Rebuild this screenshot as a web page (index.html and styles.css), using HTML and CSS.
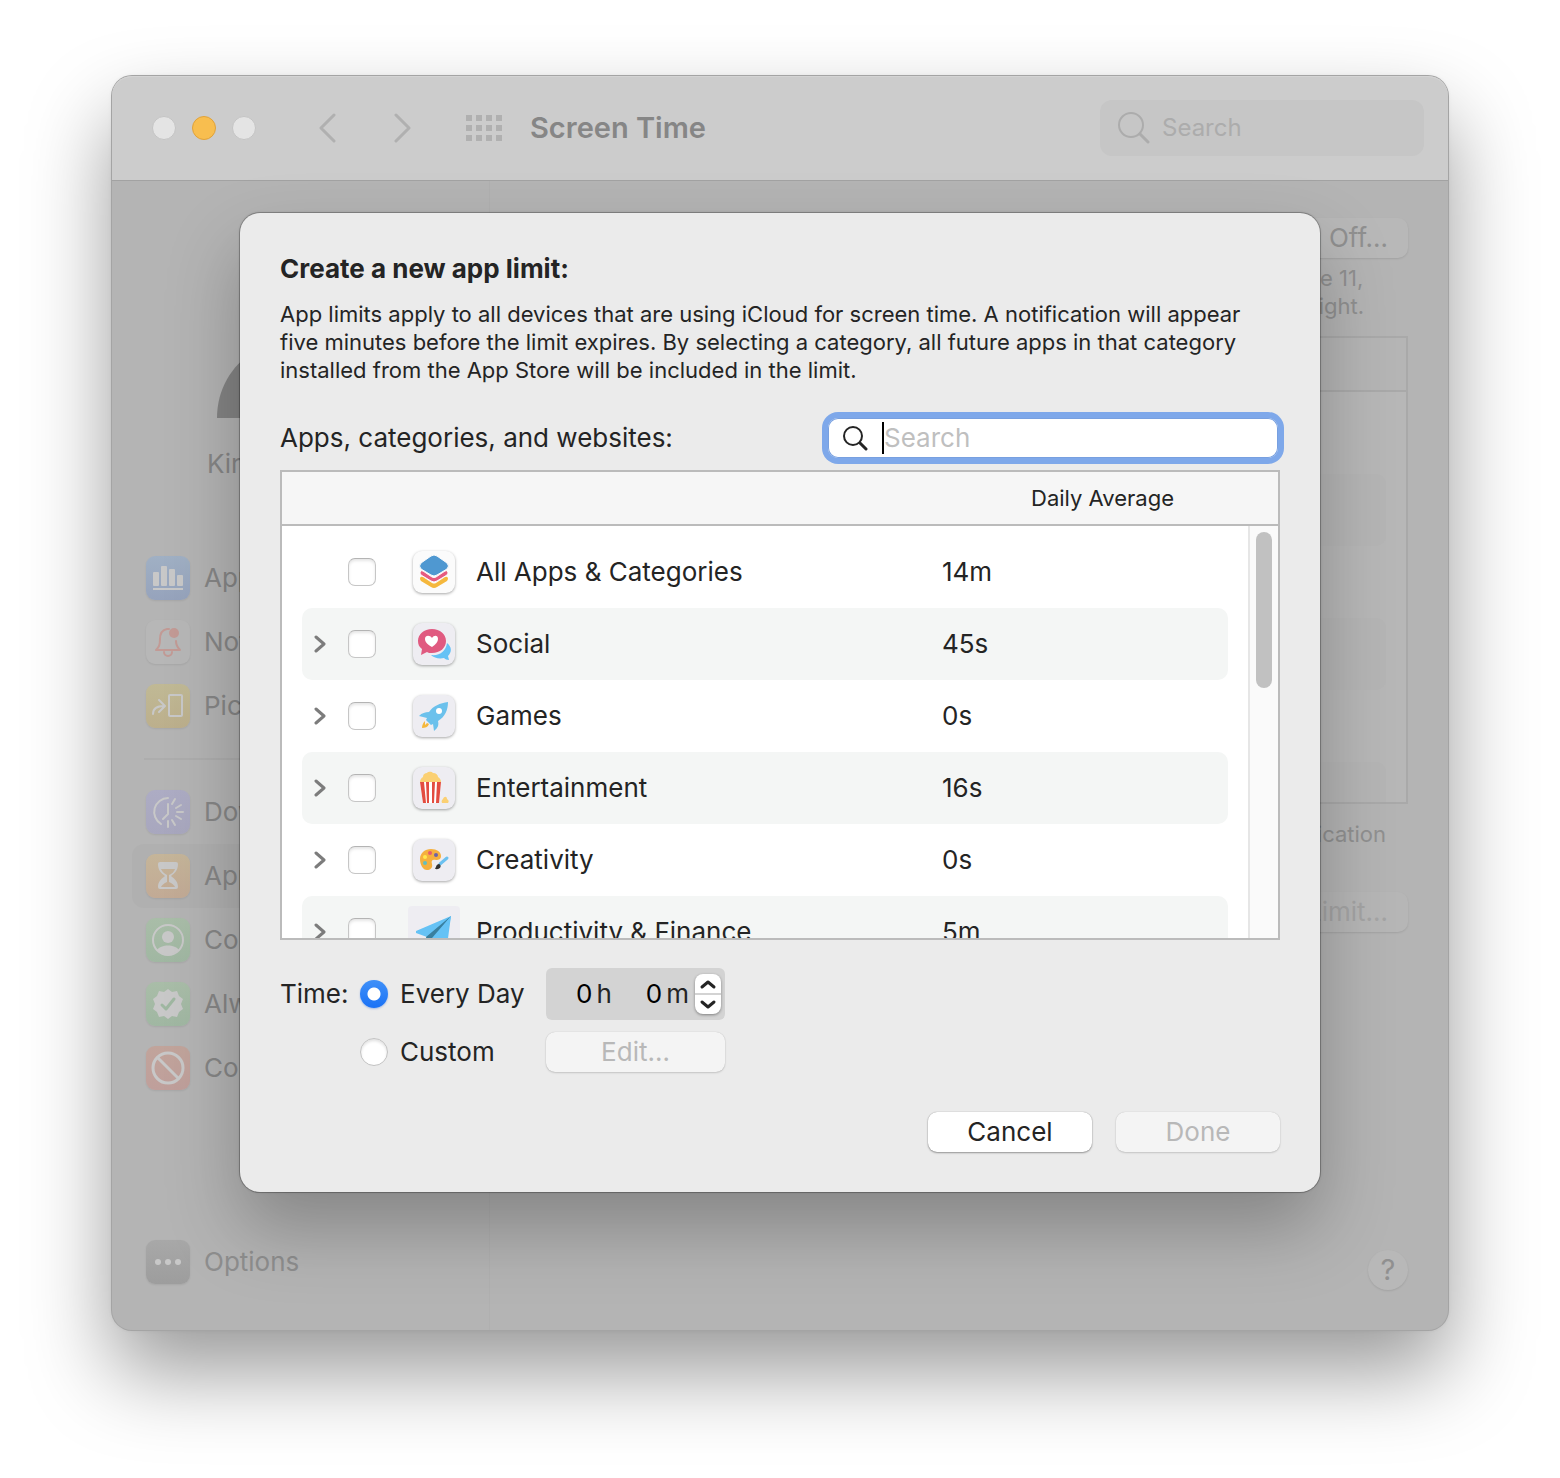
FILE: index.html
```html
<!DOCTYPE html>
<html lang="en">
<head>
  <meta charset="UTF-8" />
  <meta name="viewport" content="width=device-width, initial-scale=1.0"/>
  <title>Screen Time</title>
  <link rel="stylesheet" href="styles.css">
</head>
<body>
  <div class="window">
    <header class="titlebar">
      <div class="lights">
        <button class="light" aria-label="Close"></button>
        <button class="light light-yellow" aria-label="Minimize"></button>
        <button class="light" aria-label="Zoom"></button>
      </div>
      <div class="history">
        <button class="icon-btn" aria-label="Back">
          <svg width="18" height="30" viewBox="0 0 18 30"><path d="M16 2 3 15l13 13"/></svg>
        </button>
        <button class="icon-btn" aria-label="Forward">
          <svg width="18" height="30" viewBox="0 0 18 30"><path d="m2 2 13 13L2 28"/></svg>
        </button>
      </div>
      <button class="icon-btn all-btn" aria-label="Show all">
        <svg width="36" height="26" viewBox="0 0 36 26">
          <path d="M3 0v26M13 0v26M23 0v26M33 0v26" stroke-width="6" stroke-dasharray="6 4"/>
        </svg>
      </button>
      <h1>Screen Time</h1>
      <label class="title-search">
        <svg width="32" height="32" viewBox="0 0 32 32"><circle cx="13" cy="13" r="12"/><path d="m22 22 8 8" stroke-width="3"/></svg>
        <input type="search" placeholder="Search" aria-label="Search preferences">
      </label>
    </header>

    <div class="panes">
      <nav class="sidebar">
        <svg class="avatar" width="168" height="180" viewBox="0 0 168 180">
          <circle cx="84" cy="52" r="42"/>
          <path d="M0 180C0 152 14 128 36 114c28-14 68-14 96 0 22 14 36 38 36 66z"/>
        </svg>
        <p class="user">Kirk McElhearn</p>

        <a href="#" class="nav-item">
          <span class="nav-icon blue"><svg viewBox="0 0 44 44"><g class="fill">
            <rect x="7" y="16" width="6" height="14" rx="1"/><rect x="15" y="10" width="6" height="20" rx="1"/>
            <rect x="23" y="13" width="6" height="17" rx="1"/><rect x="31" y="19" width="6" height="11" rx="1"/>
            <rect x="7" y="32" width="30" height="2"/></g></svg></span>
          App Usage
        </a>
        <a href="#" class="nav-item">
          <span class="nav-icon plain"><svg viewBox="0 0 44 44">
            <path d="M23 9h-2c-5 1-7 5-7 10 0 6-1 8-4 11h24c-2-2-4-4-4-9M18 32a4 4 0 0 0 8 0"/>
            <circle class="dot" cx="28" cy="13" r="5"/></svg></span>
          Notifications
        </a>
        <a href="#" class="nav-item">
          <span class="nav-icon yellow"><svg viewBox="0 0 44 44">
            <path d="M7 30c0-6 4-8 11-8M13 16l6 6-6 6"/><rect x="23" y="11" width="13" height="21" rx="1"/></svg></span>
          Pickups
        </a>
        <hr>
        <a href="#" class="nav-item">
          <span class="nav-icon purple"><svg viewBox="0 0 44 44">
            <path d="M22 8A14 14 0 0 0 15 34M22 14v10l-5 5M26 14l3-5M30 18l5-3M31 22h6M30 26l5 3M26 30l3 5M22 31v6"/></svg></span>
          Downtime
        </a>
        <a href="#" class="nav-item selected">
          <span class="nav-icon orange"><svg viewBox="0 0 44 44">
            <path class="fill" fill-rule="evenodd" d="M14 8h16q2 0 2 2c0 6-3 9-7 12 4 3 7 6 7 11q0 2-2 2H14q-2 0-2-2c0-5 3-8 7-11-4-3-7-6-7-12q0-2 2-2zm1 7c1 3 4 5 6 6v7c-3 1-5 3-6 5h14c-1-2-3-4-6-5v-7c3-1 5-3 6-6z"/></svg></span>
          App Limits
        </a>
        <a href="#" class="nav-item">
          <span class="nav-icon green"><svg viewBox="0 0 44 44">
            <circle cx="22" cy="22" r="15"/><circle class="fill" cx="22" cy="19" r="6"/>
            <path class="fill" d="M11 32c4-6 18-6 22 0-6 6-16 6-22 0z"/></svg></span>
          Communication
        </a>
        <a href="#" class="nav-item">
          <span class="nav-icon green"><svg viewBox="0 0 44 44">
            <path class="fill" d="m22 7 4 3 5-1 2 5 4 3-2 5 2 5-4 3-2 5-5-1-4 3-4-3-5 1-2-5-4-3 2-5-2-5 4-3 2-5 5 1z"/>
            <path class="tick" d="m16 23 4 4 8-10"/></svg></span>
          Always Allowed
        </a>
        <a href="#" class="nav-item">
          <span class="nav-icon red"><svg viewBox="0 0 44 44">
            <circle cx="22" cy="22" r="15" stroke-width="3"/><path d="m12 12 20 20" stroke-width="3"/></svg></span>
          Content &amp; Privacy
        </a>
        <a href="#" class="nav-item options">
          <span class="nav-icon gray"><svg viewBox="0 0 44 44"><g class="fill">
            <circle cx="12" cy="22" r="3"/><circle cx="22" cy="22" r="3"/><circle cx="32" cy="22" r="3"/></g></svg></span>
          Options
        </a>
      </nav>

      <main class="main">
        <button class="dim-btn">Turn Off…</button>
        <p class="status">Since June 11,<br>until midnight.</p>
        <div class="limits">
          <div class="limits-head"></div>
          <div class="limits-row"></div>
          <div class="limits-row"></div>
          <div class="limits-row"></div>
          <div class="limits-row"></div>
          <div class="limits-row"></div>
          <div class="limits-row"></div>
        </div>
        <p class="note">Limits apply to every application</p>
        <button class="dim-btn off" disabled>Edit Limit…</button>
        <button class="help" aria-label="Help">?</button>
      </main>
    </div>

    <div class="sheet" role="dialog" aria-modal="true" aria-labelledby="sheetTitle">
      <h2 id="sheetTitle">Create a new app limit:</h2>
      <p class="intro">App limits apply to all devices that are using iCloud for screen time. A notification will appear<br>
        five minutes before the limit expires. By selecting a category, all future apps in that category<br>
        installed from the App Store will be included in the limit.</p>

      <div class="find">
        <label for="appSearch">Apps, categories, and websites:</label>
        <div class="find-box">
          <svg width="26" height="26" viewBox="0 0 26 26"><circle cx="11" cy="11" r="9"/><path d="m18 18 6 6" stroke-width="3"/></svg>
          <span class="caret"></span>
          <input type="search" id="appSearch" placeholder="Search">
        </div>
      </div>

      <div class="list">
        <table>
          <thead>
            <tr><th scope="col">Daily Average</th></tr>
          </thead>
          <tbody>
            <tr>
              <td></td>
              <td><input type="checkbox" aria-label="All Apps &amp; Categories"></td>
              <td><svg class="cat white" viewBox="0 0 42 42">
                <path fill="#f5b83d" d="M7 27q1-2 3-1l9 6q2 1 4 0l9-6q2-1 3 1 0 2-1 3l-10 6q-3 2-6 0L8 30q-1-1-1-3z"/>
                <path fill="#e65a80" stroke="#fbfbfb" d="M7 21q1-2 3-1l9 6q2 1 4 0l9-6q2-1 3 1 0 2-1 3l-10 6q-3 2-6 0L8 24q-1-1-1-3z"/>
                <path fill="#4f98d1" stroke="#fbfbfb" d="M18 5q3-2 6 0l10 7q3 3 0 6l-10 6q-3 2-6 0L8 18q-3-3 0-6z"/></svg></td>
              <td>All Apps &amp; Categories</td>
              <td>14m</td>
            </tr>
            <tr>
              <td><button class="expand" aria-label="Expand Social"><svg viewBox="0 0 12 18"><path d="m2 2 8 7-8 7"/></svg></button></td>
              <td><input type="checkbox" aria-label="Social"></td>
              <td><svg class="cat" viewBox="0 0 42 42">
                <path fill="#65c2f5" d="M34 20c5 4 5 9 1 13l1 4c-2 0-4-1-5-2-5 1-10 0-13-3 9 1 15-4 16-12z"/>
                <path fill="#e05a80" d="M19 6c8 0 14 5 14 12s-6 12-14 12c-2 0-4 0-5-1l-6 3 1-6c-3-2-4-5-4-8C5 11 11 6 19 6z"/>
                <path fill="#fff" d="M19 24c-5-3-7-5-7-8 0-4 5-4 7-1 2-3 6-3 6 1 0 3-2 5-6 8z"/></svg></td>
              <td>Social</td>
              <td>45s</td>
            </tr>
            <tr>
              <td><button class="expand" aria-label="Expand Games"><svg viewBox="0 0 12 18"><path d="m2 2 8 7-8 7"/></svg></button></td>
              <td><input type="checkbox" aria-label="Games"></td>
              <td><svg class="cat" viewBox="0 0 42 42">
                <path fill="#6bc1ec" d="M35 7c-8 1-15 4-19 10-4 0-7 1-10 4l8 2-1 2 5 5 2-1 1 7c4-3 5-6 4-10 7-4 10-11 10-19z"/>
                <circle cx="26" cy="16" r="3" fill="#fff"/>
                <path fill="#f5b83d" d="M12 26c-2 2-3 4-3 7 3 0 6-1 7-4l-2-1-2 2z"/></svg></td>
              <td>Games</td>
              <td>0s</td>
            </tr>
            <tr>
              <td><button class="expand" aria-label="Expand Entertainment"><svg viewBox="0 0 12 18"><path d="m2 2 8 7-8 7"/></svg></button></td>
              <td><input type="checkbox" aria-label="Entertainment"></td>
              <td><svg class="cat" viewBox="0 0 42 42">
                <path fill="#fbd073" d="M7 15c0-2 1-4 3-5 0-3 2-4 4-4 2-2 5-1 6 0 3 0 5 2 5 4 2 1 3 3 3 5zM29 36c-1-2 0-3 1-4 1-3 4-3 4 0 2 1 2 3 1 4z"/>
                <path fill="#fff" d="M7 15h21l-2 21H10z"/>
                <path fill="#e34c40" d="M7 15h4l2 21h-3zM13 15h3v21h-2zM19 15h3l-1 21h-2zM24 15h4l-2 21h-3z"/></svg></td>
              <td>Entertainment</td>
              <td>16s</td>
            </tr>
            <tr>
              <td><button class="expand" aria-label="Expand Creativity"><svg viewBox="0 0 12 18"><path d="m2 2 8 7-8 7"/></svg></button></td>
              <td><input type="checkbox" aria-label="Creativity"></td>
              <td><svg class="cat" viewBox="0 0 42 42">
                <path fill="#f5b03e" d="M7 20c0-6 5-10 11-10s10 3 10 7c0 3-2 4-5 4-4-1-5 1-4 4 1 4-2 6-5 6-4 0-7-5-7-11z"/>
                <circle cx="12" cy="18" r="2" fill="#ffe94d"/><circle cx="17" cy="14" r="2" fill="#e65a70"/>
                <circle cx="23" cy="16" r="2" fill="#6b62a8"/><circle cx="12" cy="24" r="2" fill="#62bfc0"/>
                <path d="m27 25 7-6" stroke="#6bc1f0" stroke-width="3" stroke-linecap="round"/>
                <path fill="#333" d="M22 30c1-1 1-5 4-5 3 1 2 6-4 5z"/></svg></td>
              <td>Creativity</td>
              <td>0s</td>
            </tr>
            <tr>
              <td><button class="expand" aria-label="Expand Productivity &amp; Finance"><svg viewBox="0 0 12 18"><path d="m2 2 8 7-8 7"/></svg></button></td>
              <td><input type="checkbox" aria-label="Productivity &amp; Finance"></td>
              <td><svg class="cat large" viewBox="0 0 52 52">
                <path fill="#65c2f5" d="M43 10 8 25v2l11 4 20 9z"/>
                <path fill="#397f9f" d="M43 10 18 31l2 10 4-7z"/>
                <path fill="#65c2f5" d="M43 10 24 32l13 8z"/></svg></td>
              <td>Productivity &amp; Finance</td>
              <td>5m</td>
            </tr>
          </tbody>
        </table>
        <div class="scrollbar"><div class="thumb"></div></div>
      </div>

      <div class="time">
        <span>Time:</span>
        <label class="choice"><input type="radio" name="when" checked>Every Day</label>
        <div class="duration">
          <input type="text" id="hours" value="0"><label for="hours">h</label>
          <input type="text" id="minutes" value="0"><label for="minutes">m</label>
          <div class="stepper">
            <button aria-label="Increase"><svg viewBox="0 0 14 8"><path d="m1 7 6-5 6 5"/></svg></button>
            <button aria-label="Decrease"><svg viewBox="0 0 14 8"><path d="m1 1 6 5 6-5"/></svg></button>
          </div>
        </div>
        <label class="choice custom"><input type="radio" name="when">Custom</label>
        <button class="push" disabled>Edit…</button>
      </div>

      <div class="actions">
        <button class="push">Cancel</button>
        <button class="push" disabled>Done</button>
      </div>
    </div>
  </div>
</body>
</html>
```
FILE: styles.css
```css
* {
  box-sizing: border-box;
}

body {
  margin: 0;
  min-height: 100vh;
  padding: 76px 112px 148px;
  display: flex;
  background: #fff;
  color: #242424;
  font-family: Inter, "Liberation Sans", sans-serif;
  font-size: 26px;
  line-height: 32px;
}

h1, h2, p {
  margin: 0;
}

button, input {
  font: inherit;
  color: inherit;
  margin: 0;
  padding: 0;
  border: none;
  background: none;
}

input {
  outline: none;
  min-width: 0;
}

input[type="search"] {
  appearance: none;
}

svg {
  display: block;
  flex-shrink: 0;
}

.window {
  position: relative;
  flex: 1;
  display: flex;
  flex-direction: column;
  border-radius: 20px;
  background: #b4b4b4;
  box-shadow: 0 0 0 1px #a4a4a4, 0 0 4px rgba(0, 0, 0, .08), 0 42px 84px rgba(0, 0, 0, .4);
}

/* Title bar */
.titlebar {
  display: flex;
  align-items: center;
  height: 105px;
  padding: 0 24px 0 40px;
  background: #ccc;
  border-bottom: 1px solid #a2a2a2;
  border-radius: 20px 20px 0 0;
  box-shadow: inset 0 1px #d4d4d4;
}

.lights {
  display: flex;
  gap: 16px;
}

.light {
  width: 24px;
  height: 24px;
  border-radius: 50%;
  background: #e4e4e4;
  border: 1px solid #c4c4c4;
}

.light-yellow {
  background: #f8be4f;
  border-color: #e0a23a;
}

.history {
  display: flex;
  gap: 58px;
  margin-left: 62px;
}

.icon-btn svg {
  fill: none;
  stroke: #b0b0b0;
  stroke-width: 3;
  stroke-linecap: round;
  stroke-linejoin: round;
}

.all-btn {
  margin-left: 54px;
}

.all-btn svg {
  stroke-linecap: butt;
}

h1 {
  margin-left: 28px;
  color: #868686;
  font-size: 29px;
  font-weight: 600;
}

.title-search {
  display: flex;
  align-items: center;
  gap: 12px;
  width: 324px;
  height: 56px;
  margin-left: auto;
  padding: 0 18px;
  border-radius: 12px;
  background: #c6c6c6;
}

.title-search svg {
  fill: none;
  stroke: #acacac;
  stroke-width: 2;
  stroke-linecap: round;
}

.title-search input {
  width: 100%;
  font-size: 24px;
}

.title-search input::placeholder {
  color: #acacac;
}

/* Window body */
.panes {
  flex: 1;
  display: flex;
}

.sidebar {
  display: flex;
  flex-direction: column;
  width: 378px;
  padding: 57px 20px 36px;
  border-right: 1px solid #b0b0b0;
  color: #868686;
}

.avatar {
  align-self: center;
  fill: #848484;
}

.user {
  margin: 30px 0 66px;
  text-align: center;
}

.nav-item {
  display: flex;
  align-items: center;
  gap: 14px;
  height: 64px;
  padding: 0 14px;
  border-radius: 12px;
  color: inherit;
  text-decoration: none;
}

.nav-item.selected {
  background: #b0b0b0;
}

.options {
  margin-top: auto;
  color: #8e8e8e;
}

.sidebar hr {
  align-self: stretch;
  height: 2px;
  margin: 20px 12px;
  border: none;
  background: #adadad;
}

.nav-icon {
  width: 44px;
  height: 44px;
  border-radius: 9px;
  box-shadow: 0 1px 2px rgba(0, 0, 0, .08);
}

.nav-icon svg {
  fill: none;
  stroke: #c8c8c8;
  stroke-width: 2;
  stroke-linecap: round;
  stroke-linejoin: round;
}

.nav-icon .fill {
  fill: #c8c8c8;
  stroke: none;
}

.nav-icon .tick {
  stroke: #9fb7a1;
  stroke-width: 3;
}

.plain svg {
  stroke: #c29a95;
}

.plain .dot {
  fill: #c29a95;
  stroke: none;
}

.blue { background: linear-gradient(#a0b0c4, #96a3bc); }
.plain { background: #b7b7b7; }
.yellow { background: linear-gradient(#c0b995, #bcaf8c); }
.purple { background: linear-gradient(#adacc4, #a8a7be); }
.orange { background: linear-gradient(#c5b599, #c2aa95); }
.green { background: linear-gradient(#a9bda8, #a0b7a2); }
.red { background: linear-gradient(#c1a49b, #bf9f9b); }
.gray { background: linear-gradient(#a8a8a8, #9d9d9d); }

.main {
  flex: 1;
  display: flex;
  flex-direction: column;
  align-items: flex-end;
  padding: 37px 40px 40px;
  color: #909090;
}

.dim-btn {
  height: 40px;
  padding: 0 20px;
  border-radius: 10px;
  background: #b8b8b8;
  box-shadow: 0 1px 2px rgba(0, 0, 0, .1);
}

.dim-btn.off {
  color: #a4a4a4;
  background: #b6b6b6;
}

.status {
  margin: 6px 44px 16px 0;
  font-size: 22px;
  line-height: 28px;
}

.limits {
  width: 100%;
  height: 468px;
  overflow: hidden;
  border: 2px solid #a9a9a9;
  background: #b7b7b7;
}

.limits-head {
  height: 54px;
  margin-bottom: 10px;
  border-bottom: 2px solid #a9a9a9;
  background: #b5b5b5;
}

.limits-row {
  height: 72px;
  margin: 0 20px;
  border-radius: 10px;
}

.limits-row:nth-child(odd) {
  background: #b5b5b5;
}

.note {
  margin: 16px 22px 44px 0;
  font-size: 22px;
  line-height: 28px;
}

.help {
  width: 40px;
  height: 40px;
  margin-top: auto;
  border-radius: 50%;
  background: #b8b8b8;
  box-shadow: 0 1px 2px rgba(0, 0, 0, .1);
  font-size: 29px;
}

/* Sheet */
.sheet {
  position: absolute;
  top: 137px;
  left: 128px;
  right: 128px;
  padding: 40px;
  border-radius: 20px;
  background: #ebebeb;
  box-shadow: 0 0 0 1px rgba(0, 0, 0, .22), 0 0 3px rgba(0, 0, 0, .2), 0 36px 72px rgba(0, 0, 0, .26);
}

h2 {
  font-size: 26px;
  font-weight: 700;
}

.intro {
  margin: 15px 0 34px;
  font-size: 22px;
  line-height: 28px;
}

.find {
  display: flex;
  align-items: center;
  justify-content: space-between;
  height: 40px;
  margin-bottom: 12px;
  padding-right: 2px;
}

.find-box {
  display: flex;
  align-items: center;
  width: 450px;
  height: 40px;
  padding: 0 14px;
  border-radius: 10px;
  background: #fff;
  box-shadow: inset 0 0 0 1px #78a0e0, 0 0 0 6px #7ea8ea;
}

.find-box svg {
  margin-right: 14px;
  fill: none;
  stroke: #242424;
  stroke-width: 2;
  stroke-linecap: round;
}

.find-box input {
  flex: 1;
  caret-color: transparent;
}

.find-box input::placeholder {
  color: #bfbfbf;
}

.caret {
  width: 2px;
  height: 32px;
  background: #000;
}

.list {
  position: relative;
  height: 470px;
  overflow: hidden;
  border: 2px solid #bbb;
  background: #fff;
}

.list table, .list thead, .list tbody {
  display: block;
}

.list thead tr {
  display: flex;
  align-items: center;
  justify-content: flex-end;
  height: 54px;
  padding-right: 104px;
  border-bottom: 2px solid #bbb;
  background: #f6f6f6;
}

.list th {
  padding: 0;
  font-size: 22px;
  font-weight: 400;
}

.list tbody {
  padding: 10px 50px 0 20px;
}

.list tbody tr {
  display: grid;
  grid-template-columns: 46px 60px 68px 1fr 286px;
  align-items: center;
  height: 72px;
  border-radius: 10px;
}

.list tbody tr:nth-child(even) {
  background: #f4f6f5;
}

.list td {
  padding: 0;
}

.expand {
  display: block;
  padding: 0 12px;
}

.expand svg {
  width: 12px;
  height: 18px;
  fill: none;
  stroke: #7c7c7c;
  stroke-width: 3;
  stroke-linecap: round;
  stroke-linejoin: round;
}

input[type="checkbox"] {
  appearance: none;
  display: block;
  width: 28px;
  height: 28px;
  border: 1px solid #c6c6c6;
  border-top-color: #b4b4b4;
  border-radius: 7px;
  background: #fff;
  box-shadow: inset 0 2px 3px rgba(0, 0, 0, .1);
}

.cat {
  width: 42px;
  height: 42px;
  margin: 0 5px;
  border-radius: 9px;
  background: #eeedf2;
  box-shadow: 0 1px 3px rgba(0, 0, 0, .35);
}

.cat.white {
  background: #fbfbfb;
}

.cat.large {
  width: 52px;
  height: 52px;
  margin: 0;
  border-radius: 4px;
  box-shadow: none;
}

.scrollbar {
  position: absolute;
  top: 54px;
  right: 0;
  bottom: 0;
  width: 30px;
  padding: 6px;
  border-left: 2px solid #e6e6e6;
  background: #fafafa;
}

.thumb {
  width: 16px;
  height: 156px;
  border-radius: 8px;
  background: #c1c1c1;
}

.time {
  display: grid;
  grid-template-columns: 80px 186px 179px;
  grid-template-rows: 52px 40px;
  row-gap: 12px;
  align-items: center;
  margin-top: 28px;
}

.choice {
  display: flex;
  align-items: center;
  gap: 12px;
}

.choice.custom {
  grid-column: 2;
}

input[type="radio"] {
  appearance: none;
  width: 28px;
  height: 28px;
  border: 1px solid #c2c2c2;
  border-radius: 50%;
  background: #fff;
  box-shadow: inset 0 2px 3px rgba(0, 0, 0, .12);
}

input[type="radio"]:checked {
  border: none;
  background: radial-gradient(circle, #fff 6px, transparent 7px), linear-gradient(#3f90f8, #1a72f6);
  box-shadow: 0 1px 2px rgba(0, 80, 220, .3);
}

.duration {
  display: flex;
  align-items: center;
  gap: 4px;
  height: 52px;
  padding-right: 4px;
  border-radius: 6px;
  background: #d3d3d3;
}

.duration input {
  flex: 1;
  width: 32px;
  color: #000;
  text-align: right;
}

.stepper {
  display: flex;
  flex-direction: column;
  width: 26px;
  height: 40px;
  margin-left: 2px;
  border-radius: 8px;
  background: #fff;
  box-shadow: 0 1px 3px rgba(0, 0, 0, .4);
}

.stepper button {
  flex: 1;
  display: flex;
  align-items: center;
  justify-content: center;
}

.stepper button + button {
  border-top: 2px solid #d3d3d3;
}

.stepper svg {
  width: 14px;
  height: 8px;
  overflow: visible;
  fill: none;
  stroke: #242424;
  stroke-width: 3;
  stroke-linecap: round;
  stroke-linejoin: round;
}

.push {
  height: 40px;
  border-radius: 9px;
  background: #fff;
  box-shadow: 0 0 1px rgba(0, 0, 0, .35), 0 1px 2px rgba(0, 0, 0, .35);
}

.push:disabled {
  color: #b8b8b8;
  background: #f4f4f4;
  box-shadow: 0 0 1px rgba(0, 0, 0, .2), 0 1px 2px rgba(0, 0, 0, .15);
}

.actions {
  display: flex;
  justify-content: flex-end;
  gap: 24px;
  margin-top: 40px;
}

.actions .push {
  width: 164px;
}
```
